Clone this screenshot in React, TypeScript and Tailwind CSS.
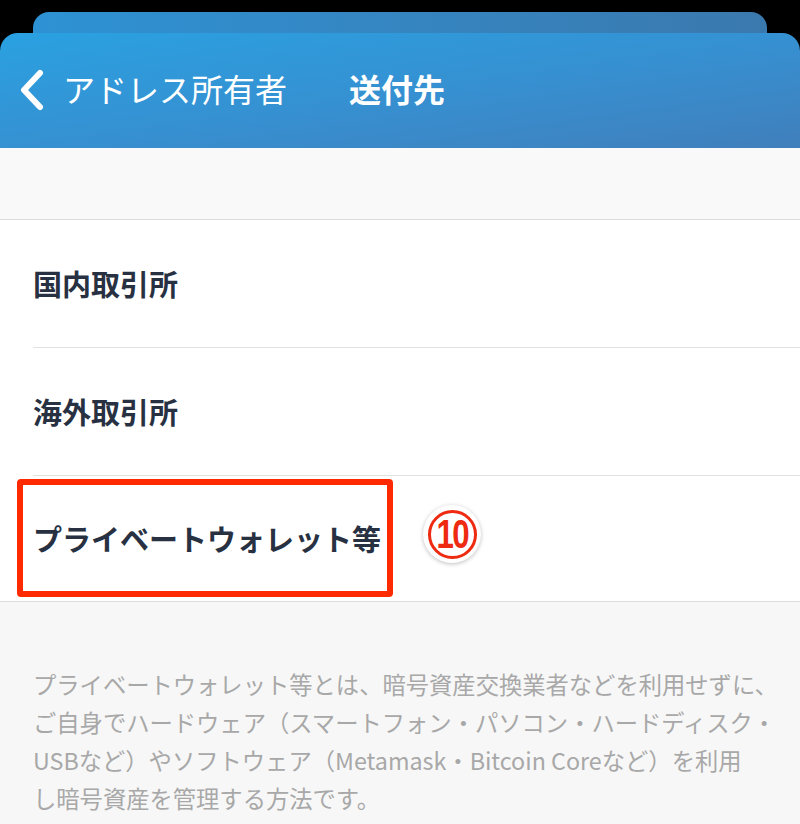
import React from "react";

const font = { fontFamily: '"Noto Sans CJK JP", "Noto Sans", sans-serif' };

function Row({ label, inset = true, children }: { label: string; inset?: boolean; children?: React.ReactNode }) {
  return (
    <div className={`relative bg-white pl-[33px] ${inset ? "" : "border-b border-[#dedede]"}`}>
      <div className={`flex items-center ${inset ? "h-[128px] border-b border-[#e2e2e2]" : "h-[125px]"}`}>
        <span className="text-[29px] font-bold leading-none text-[#283142]">{label}</span>
      </div>
      {children}
    </div>
  );
}

export default function App() {
  return (
    <div className="h-[824px] w-[800px] overflow-hidden bg-black" style={font}>
      <div className="mx-[33px] mt-[12px] h-[21px] rounded-t-[16px] bg-gradient-to-r from-[#2d92d4] to-[#3a79ae]" />
      <div className="flex h-[115px] items-center rounded-t-[18px] bg-gradient-to-br from-[#29a1e1] via-[#3591d2] to-[#407fbc] pb-[5px] pl-[18px]">
        <svg width="28" height="42" viewBox="0 0 28 42" className="mt-[4px] shrink-0">
          <path d="M22 4 L6 21 L22 38" fill="none" stroke="white" strokeWidth="6" strokeLinecap="round" strokeLinejoin="round" />
        </svg>
        <span className="ml-[17px] text-[32px] font-normal leading-none text-white">アドレス所有者</span>
        <span className="ml-[62px] text-[32px] font-bold leading-none text-white">送付先</span>
      </div>
      <div className="h-[72px] border-b border-[#dcdcdc] bg-[#f9f9f9]" />
      <Row label="国内取引所" />
      <Row label="海外取引所" />
      <Row label="プライベートウォレット等" inset={false}>
        <div className="absolute left-[17px] top-[3px] h-[118px] w-[376px] rounded-[4px] border-[6px] border-[#ff2a00]" />
        <div className="absolute left-[423px] top-[29px] flex h-[58px] w-[58px] items-center justify-center rounded-full bg-white shadow-[0_1px_4px_rgba(0,0,0,0.25)]">
          <div className="flex h-[49px] w-[49px] items-center justify-center rounded-full border-[3px] border-[#ee2a10]">
            <span className="text-[40px] font-bold leading-none tracking-[-2px] text-[#ee2a10]" style={{ fontFamily: '"Liberation Sans", sans-serif', transform: "scaleX(0.78)" }}>10</span>
          </div>
        </div>
      </Row>
      <div className="h-full bg-[#f7f7f7] pl-[33px] pt-[63px]">
        <p className="whitespace-nowrap text-[23.3px] leading-[38px] text-[#a8a8a8]">
          プライベートウォレット等とは、暗号資産交換業者などを利用せずに、
          <br />
          ご自身でハードウェア（スマートフォン・パソコン・ハードディスク・
          <br />
          USBなど）やソフトウェア（Metamask・Bitcoin Coreなど）を利用
          <br />
          し暗号資産を管理する方法です。
        </p>
      </div>
    </div>
  );
}
